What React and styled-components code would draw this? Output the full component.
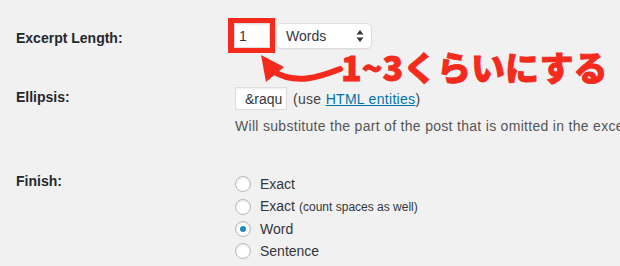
import React from "react";
import styled, {createGlobalStyle} from "styled-components";

const GlobalStyle = createGlobalStyle`
  html, body {
    margin: 0;
    padding: 0;
    background: #f1f1f1;
  }

  body {
    font-family: "Liberation Sans", Arial, sans-serif;
    color: #23282d;
  }
`;

const Page = styled.div`
  position: relative;
  width: 620px;
  height: 266px;
  overflow: hidden;
  padding-left: 16px;
  box-sizing: border-box;
  background: #f1f1f1;
  font-size: 14px;
  line-height: 20px;
`;

const Row = styled.div`
  display: grid;
  grid-template-columns: 219px 1fr;
  align-items: start;
  padding-top: ${(p) => p.$top}px;
`;

const Label = styled.div`
  font-weight: 700;
  padding-top: ${(p) => p.$offset || 0}px;
  white-space: nowrap;
`;

const Field = styled.div`
  display: flex;
  flex-direction: column;
  min-width: 0;
`;

const Inline = styled.div`
  display: flex;
  align-items: center;
  white-space: nowrap;
`;

const Highlight = styled.div`
  margin-left: -7px;
  border-style: solid;
  border-color: #f32a1c;
  border-width: 5px 5px 5px 6px;
  display: flex;
`;

const TextInput = styled.input`
  box-sizing: border-box;
  width: ${(p) => p.$width}px;
  height: ${(p) => p.$height}px;
  margin: 0;
  padding: 0 4px 0 ${(p) => p.$pad || 4}px;
  border: 1px solid #ddd;
  border-radius: 0;
  background: #fff;
  box-shadow: inset 0 1px 2px rgba(0, 0, 0, 0.07);
  font-family: "Liberation Sans", Arial, sans-serif;
  font-size: 14px;
  color: #32373c;
  outline: none;
`;

const Select = styled.div`
  box-sizing: border-box;
  width: 96px;
  height: 26px;
  margin-left: 1px;
  padding: 0 7px 0 9px;
  display: flex;
  align-items: center;
  justify-content: space-between;
  background: #fff;
  border: 1px solid #ddd;
  border-radius: 5px;
  box-shadow: 0 1px 1px rgba(0, 0, 0, 0.04);
  color: #32373c;
`;

const Hint = styled.span`
  margin-left: 6px;
  color: #444;
  letter-spacing: 0.3px;

  a {
    color: #0073aa;
    text-decoration: underline;
  }
`;

const Description = styled.div`
  margin-top: 6px;
  color: #555;
  letter-spacing: 0.3px;
  white-space: nowrap;
`;

const RadioList = styled.div`
  display: flex;
  flex-direction: column;
  padding-top: 2px;
`;

const RadioRow = styled.label`
  display: flex;
  align-items: center;
  height: 22.4px;
  gap: 9px;
  color: #32373c;
  white-space: nowrap;
`;

const Circle = styled.span`
  box-sizing: border-box;
  width: 16px;
  height: 16px;
  border-radius: 50%;
  border: 1px solid #b4b9be;
  background: #fff;
  box-shadow: inset 0 1px 2px rgba(0, 0, 0, 0.1);
  display: flex;
  align-items: center;
  justify-content: center;

  &::after {
    content: "";
    display: ${(p) => (p.$checked ? "block" : "none")};
    width: 6px;
    height: 6px;
    border-radius: 50%;
    background: #1e8cbe;
  }
`;

const Small = styled.span`
  font-size: 12px;
  margin-left: 4px;
`;

const Note = styled.div`
  position: absolute;
  left: 341px;
  top: 47px;
  font-family: "Noto Sans CJK JP", sans-serif;
  font-weight: 900;
  font-size: 34px;
  line-height: 40px;
  color: #f32a1c;
  white-space: nowrap;
  -webkit-text-stroke: 0.8px #f32a1c;
`;

const Arrow = styled.svg`
  position: absolute;
  left: 0;
  top: 0;
  pointer-events: none;
`;

const Updown = () => (
  <svg width="8" height="14" viewBox="0 0 8 14">
    <path d="M4 1 L7.5 5.5 L0.5 5.5 Z" fill="#32373c" />
    <path d="M4 13 L7.5 8.5 L0.5 8.5 Z" fill="#32373c" />
  </svg>
);

const finishOptions = [
  {label: "Exact"},
  {label: "Exact", note: "(count spaces as well)"},
  {label: "Word", checked: true},
  {label: "Sentence"},
];

export default function App() {
  return (
    <>
      <GlobalStyle />
      <Page>
        <Row $top={18}>
          <Label $offset={10}>Excerpt Length:</Label>
          <Inline>
            <Highlight>
              <TextInput $width={36} $height={25} readOnly value="1" />
            </Highlight>
            <Select>
              <span>Words</span>
              <Updown />
            </Select>
          </Inline>
        </Row>

        <Row $top={34}>
          <Label $offset={0}>Ellipsis:</Label>
          <Field>
            <Inline>
              <TextInput $width={52} $height={23} $pad={9} readOnly value={"&raquo;"} />
              <Hint>
                (use <a href="#">HTML entities</a>)
              </Hint>
            </Inline>
            <Description>
              Will substitute the part of the post that is omitted in the excerpt.
            </Description>
          </Field>
        </Row>

        <Row $top={35}>
          <Label $offset={0}>Finish:</Label>
          <RadioList>
            {finishOptions.map((opt, i) => (
              <RadioRow key={i}>
                <Circle $checked={opt.checked} />
                <span>
                  {opt.label}
                  {opt.note && <Small>{opt.note}</Small>}
                </span>
              </RadioRow>
            ))}
          </RadioList>
        </Row>

        <Arrow width="620" height="266" viewBox="0 0 620 266">
          <path
            d="M340 69 C 322 76, 296 86, 273 71"
            fill="none"
            stroke="#f32a1c"
            strokeWidth="6"
            strokeLinecap="round"
          />
          <polygon points="261,55 284,67 266,82" fill="#f32a1c" />
        </Arrow>
        <Note>1~3くらいにする</Note>
      </Page>
    </>
  );
}
